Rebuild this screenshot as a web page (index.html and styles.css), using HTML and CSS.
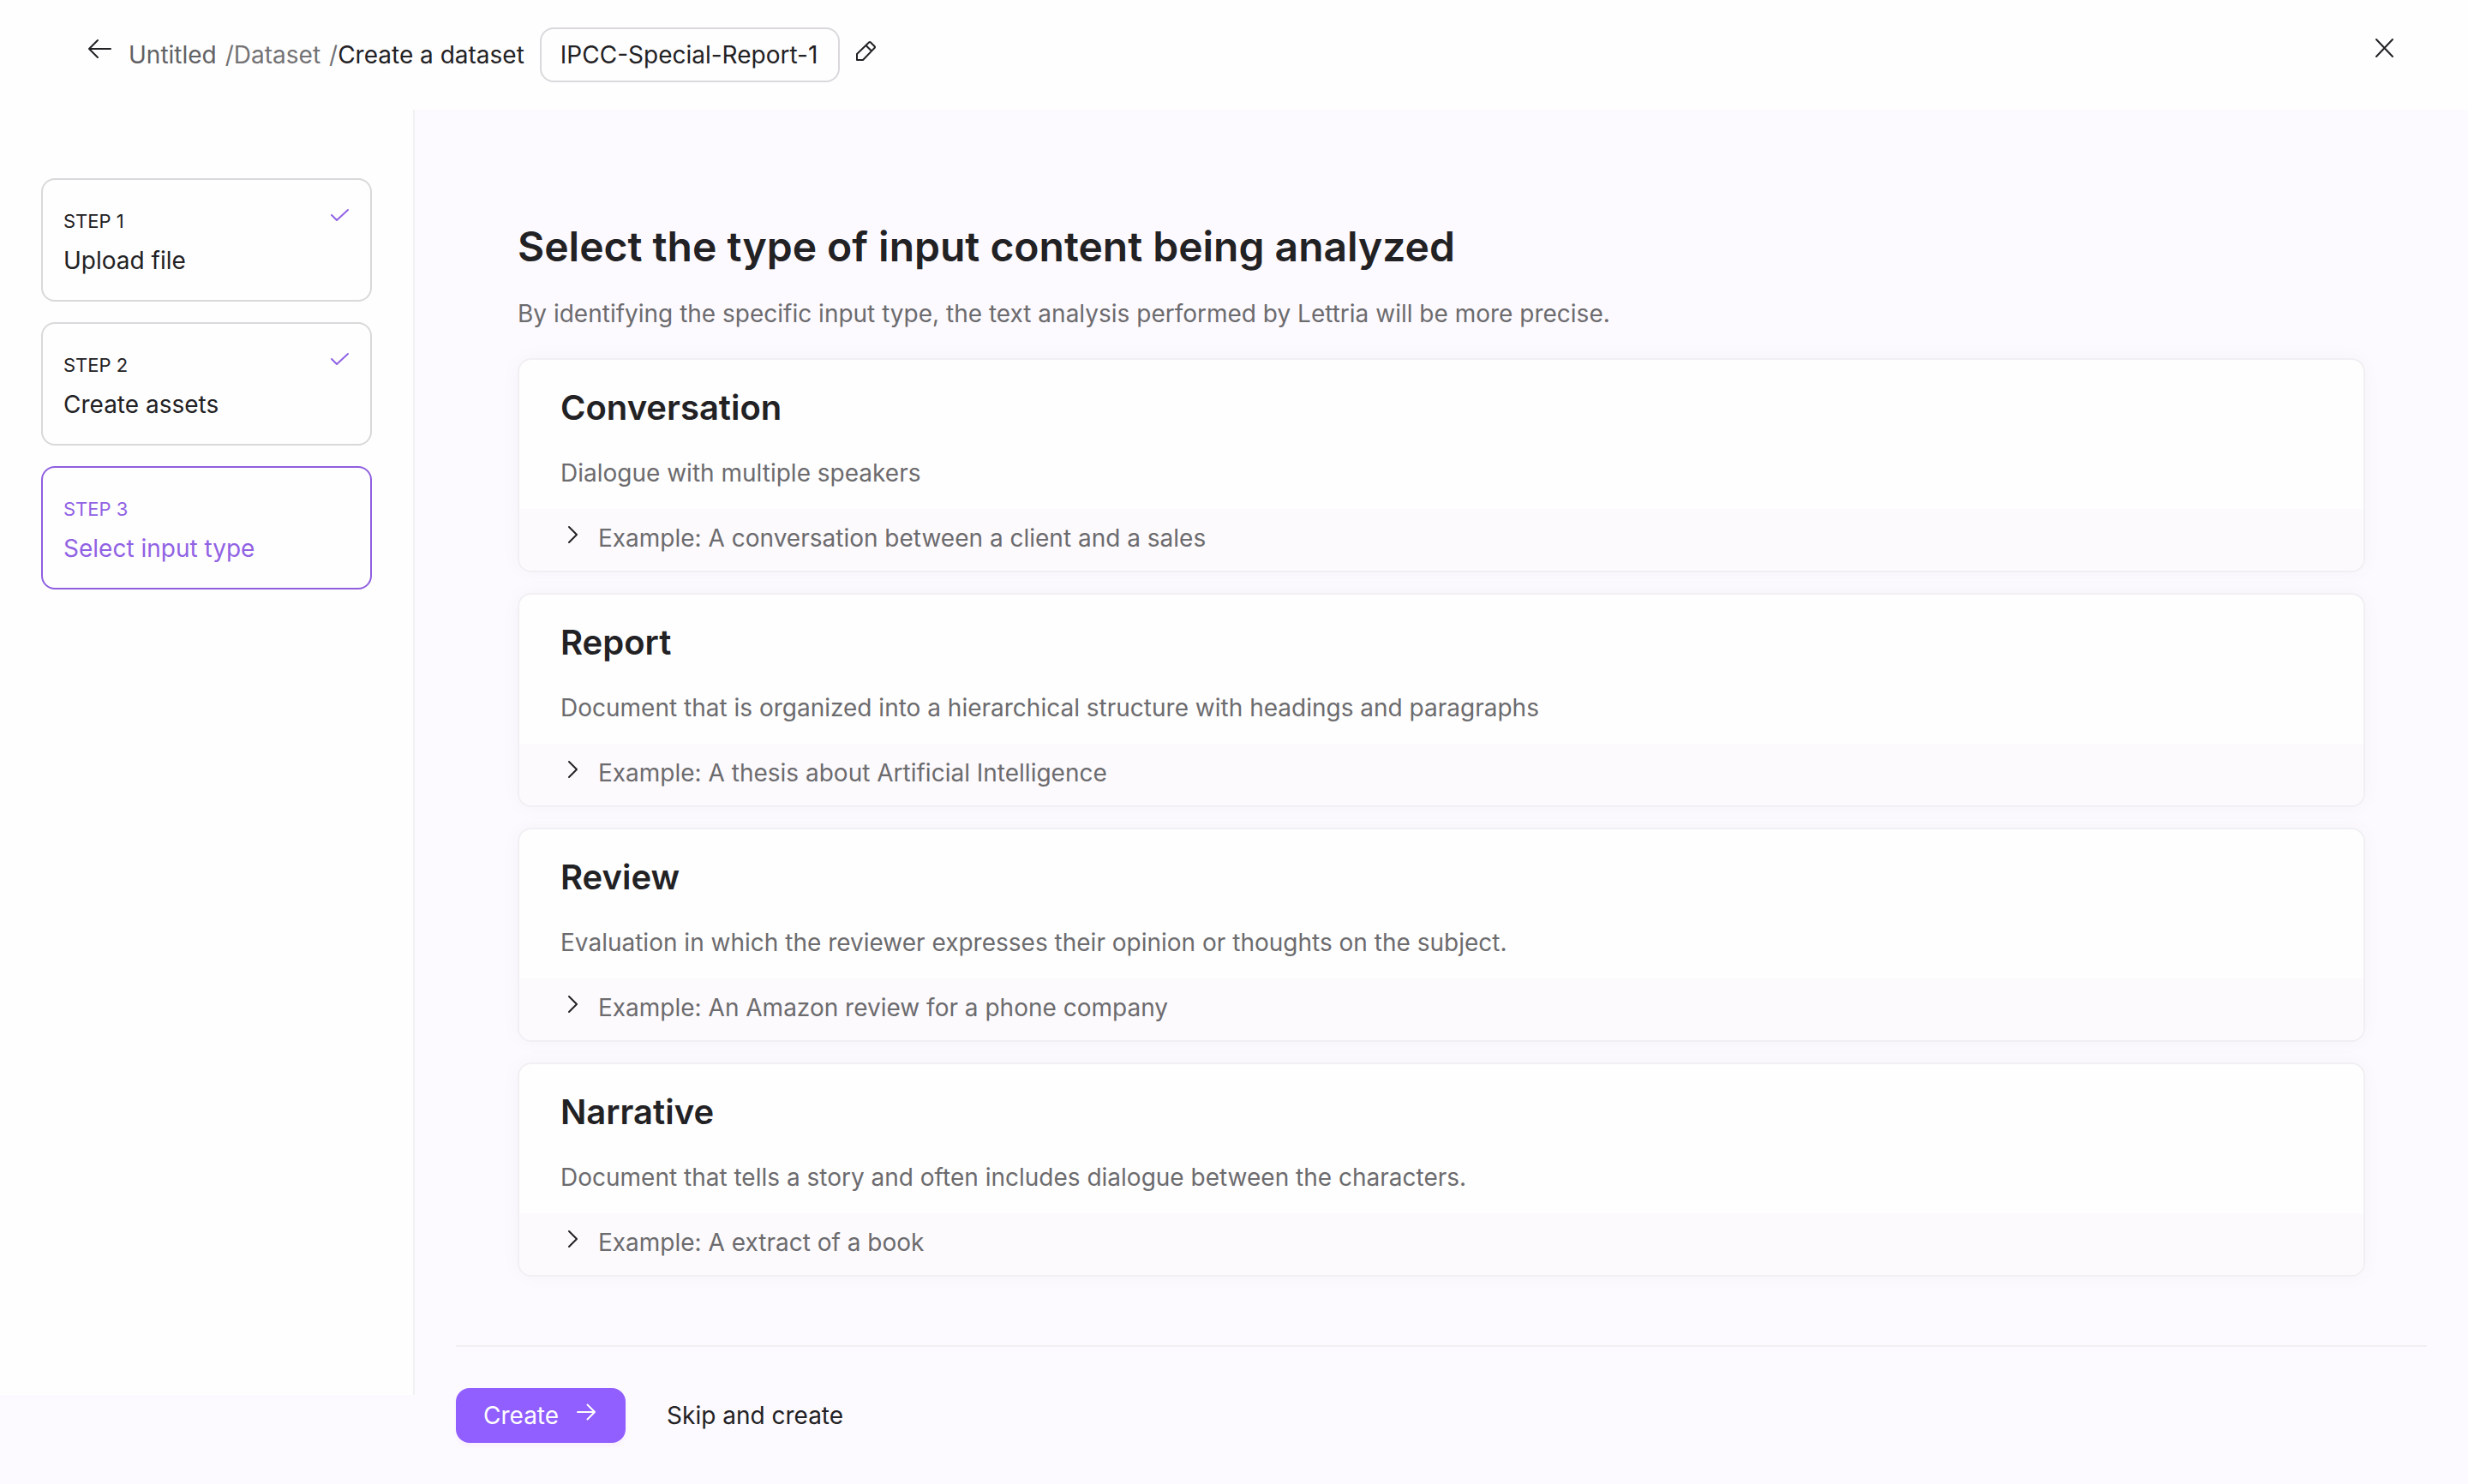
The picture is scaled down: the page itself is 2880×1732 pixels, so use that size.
FILE: index.html
```html
<!DOCTYPE html>
<html lang="en">
<head>
<meta charset="utf-8">
<title>Create a dataset</title>
<link rel="stylesheet" href="styles.css">
</head>
<body>
<header class="topbar">
  <button class="icon-button" type="button" aria-label="Back">
    <svg class="icon" viewBox="0 0 28 28"><path d="M27 14H2M12 4 2 14l10 10"/></svg>
  </button>
  <nav class="breadcrumb" aria-label="Breadcrumb">
    <a class="crumb-root" href="#">Untitled</a>
    <a href="#">/Dataset</a>
    <span>/<span class="crumb-current">Create a dataset</span></span>
  </nav>
  <input class="name-input" type="text" aria-label="Dataset name" value="IPCC-Special-Report-1">
  <button class="icon-button" type="button" aria-label="Edit name">
    <svg class="icon" viewBox="0 0 28 28"><path d="M4 27v-7L18 6.500q1-1 2 0l4.500 4.500q1 1 0 2L11 27zM14.500 10l6.500 6.500"/></svg>
  </button>
  <button class="icon-button close" type="button" aria-label="Close">
    <svg class="icon" viewBox="0 0 28 28"><path d="M5 3l19 20M24 3 5 23"/></svg>
  </button>
</header>
<div class="layout">
  <aside class="sidebar">
    <ol class="steps">
      <li class="step">
        <div><p class="step-label">STEP 1</p><p class="step-name">Upload file</p></div>
        <svg class="check" viewBox="0 0 24 24"><path d="M3 9l6 6L22 3"/></svg>
      </li>
      <li class="step">
        <div><p class="step-label">STEP 2</p><p class="step-name">Create assets</p></div>
        <svg class="check" viewBox="0 0 24 24"><path d="M3 9l6 6L22 3"/></svg>
      </li>
      <li class="step step-active" aria-current="step">
        <div><p class="step-label">STEP 3</p><p class="step-name">Select input type</p></div>
      </li>
    </ol>
  </aside>
  <div class="content">
    <main class="main">
      <h1>Select the type of input content being analyzed</h1>
      <p class="lead">By identifying the specific input type, the text analysis performed by Lettria will be more precise.</p>
      <div class="cards">
        <article class="card">
          <div class="card-body"><h2>Conversation</h2><p>Dialogue with multiple speakers</p></div>
          <details><summary><svg class="chevron" viewBox="0 0 28 28"><path d="M10 5l9 9-9 9"/></svg>Example: A conversation between a client and a sales</summary></details>
        </article>
        <article class="card">
          <div class="card-body"><h2>Report</h2><p>Document that is organized into a hierarchical structure with headings and paragraphs</p></div>
          <details><summary><svg class="chevron" viewBox="0 0 28 28"><path d="M10 5l9 9-9 9"/></svg>Example: A thesis about Artificial Intelligence</summary></details>
        </article>
        <article class="card">
          <div class="card-body"><h2>Review</h2><p>Evaluation in which the reviewer expresses their opinion or thoughts on the subject.</p></div>
          <details><summary><svg class="chevron" viewBox="0 0 28 28"><path d="M10 5l9 9-9 9"/></svg>Example: An Amazon review for a phone company</summary></details>
        </article>
        <article class="card">
          <div class="card-body"><h2>Narrative</h2><p>Document that tells a story and often includes dialogue between the characters.</p></div>
          <details><summary><svg class="chevron" viewBox="0 0 28 28"><path d="M10 5l9 9-9 9"/></svg>Example: A extract of a book</summary></details>
        </article>
      </div>
    </main>
    <footer class="actions">
      <button class="button-primary" type="button">Create
        <svg class="button-icon" viewBox="0 0 28 28"><path d="M4 14h20M15.500 5.500 24 14l-8.500 8.500"/></svg>
      </button>
      <button class="button-text" type="button">Skip and create</button>
    </footer>
  </div>
</div>
</body>
</html>
```
FILE: styles.css
```css
* {
  box-sizing: border-box;
}

body {
  margin: 0;
  min-height: 100vh;
  background: #fcfafe;
  color: #222124;
  font-family: Inter, "Liberation Sans", sans-serif;
  font-size: 28px;
  line-height: 44px;
}

h1, h2, p, ol {
  margin: 0;
  padding: 0;
}

button, input {
  font: inherit;
  color: inherit;
}

button {
  border: 0;
  padding: 0;
  background: none;
  cursor: pointer;
}

svg {
  flex: none;
  fill: none;
  stroke: currentColor;
  stroke-width: 2;
  stroke-linecap: round;
  stroke-linejoin: round;
}

.topbar {
  display: flex;
  align-items: center;
  height: 128px;
  padding: 0 84px 0 102px;
  background: #fefefe;
}

.icon-button {
  display: flex;
  padding-bottom: 14px;
}

.icon {
  width: 28px;
  height: 28px;
}

.breadcrumb {
  display: flex;
  gap: 10px;
  margin: 0 18px 0 20px;
  color: #737275;
  white-space: nowrap;
}

.breadcrumb a {
  color: inherit;
  text-decoration: none;
}

.breadcrumb .crumb-root {
  color: #626164;
}

.crumb-current {
  color: #222124;
}

.name-input {
  width: 350px;
  height: 64px;
  margin-right: 16px;
  padding: 0 22px;
  border: 2px solid #dad8dc;
  border-radius: 16px;
  background: #fefefe;
}

.close {
  margin-left: auto;
}

.layout {
  display: flex;
  align-items: flex-start;
}

.sidebar {
  flex: none;
  width: 484px;
  min-height: calc(100vh - 232px);
  padding: 80px 48px;
  border-right: 2px solid #f1f0f2;
  background: #fefefe;
}

.steps {
  display: grid;
  gap: 24px;
  list-style: none;
}

.step {
  display: flex;
  justify-content: space-between;
  padding: 32px 24px 24px;
  border: 2px solid #d9d8da;
  border-radius: 16px;
}

.step-label {
  margin-bottom: 8px;
  font-size: 22px;
  line-height: 32px;
}

.step-active {
  border-color: #8f5fe0;
  color: #9162e4;
}

.check {
  width: 24px;
  height: 24px;
  color: #9162e4;
}

.content {
  flex: 1;
  min-width: 0;
}

.main {
  padding: 132px 120px 80px;
}

h1 {
  margin-bottom: 28px;
  font-size: 48px;
  font-weight: 600;
  line-height: 56px;
}

.lead {
  margin-bottom: 30px;
  color: #6c6b6e;
}

.cards {
  display: grid;
  gap: 24px;
}

.card {
  overflow: hidden;
  border: 2px solid #f1eff3;
  border-radius: 16px;
  background: #fefefe;
  box-shadow: 0 0 24px rgba(34, 33, 36, 0.03);
  color: #6c6b6e;
}

.card-body {
  padding: 32px 48px 20px;
}

h2 {
  margin-bottom: 30px;
  color: #222124;
  font-size: 40px;
  font-weight: 600;
  line-height: 48px;
}

summary {
  display: flex;
  gap: 16px;
  padding: 12px 48px 16px;
  background: #fcfafd;
  list-style: none;
  cursor: pointer;
}

.chevron {
  width: 28px;
  height: 28px;
  margin-top: 4px;
  color: #222124;
}

.actions {
  display: flex;
  align-items: center;
  gap: 48px;
  margin: 0 48px;
  padding: 48px 0;
  border-top: 2px solid #f1f0f2;
}

.button-primary {
  display: flex;
  align-items: center;
  gap: 18px;
  height: 64px;
  padding: 0 32px;
  border-radius: 16px;
  background: #915eff;
  box-shadow: 0 4px 4px #faf0ff;
  color: #fefefe;
}

.button-icon {
  width: 28px;
  height: 28px;
  margin-bottom: 8px;
}
```
